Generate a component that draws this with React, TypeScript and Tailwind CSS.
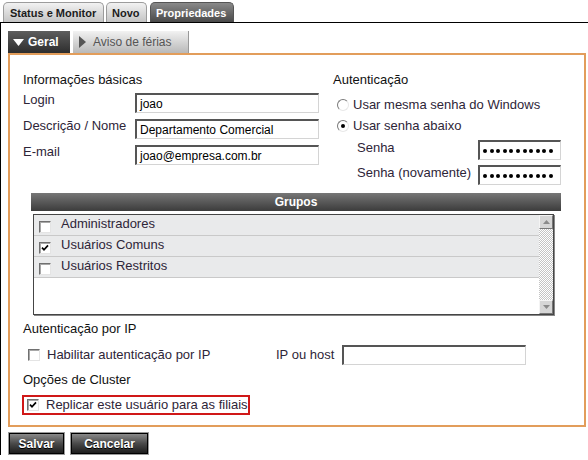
import React from "react";

// Old-school admin form: top tabs, sub tabs, orange fieldset and two glossy buttons.

function Box({ checked = false }: { checked?: boolean }) {
  return (
    <span className="flex h-[12px] w-[12px] shrink-0 items-center justify-center border-t border-l border-t-[#707070] border-l-[#707070] border-r border-b border-r-[#e4e4e4] border-b-[#e4e4e4] bg-white shadow-[inset_1px_1px_0_#a8a8a8]">
      {checked && (
        <svg viewBox="0 0 8 8" className="h-[8px] w-[8px]" aria-hidden="true">
          <path d="M1 3.6 L3 5.8 L7 1.4" stroke="#000" strokeWidth="1.7" fill="none" />
        </svg>
      )}
    </span>
  );
}

function Radio({ on = false }: { on?: boolean }) {
  return (
    <span className="flex h-[12px] w-[12px] shrink-0 items-center justify-center rounded-full border border-t-[#7a7a7a] border-l-[#7a7a7a] border-r-[#e8e8e8] border-b-[#e8e8e8] bg-white">
      {on && <span className="h-[4px] w-[4px] rounded-full bg-black" />}
    </span>
  );
}

function Field({ value = "", className = "" }: { value?: string; className?: string }) {
  return (
    <div
      className={`flex h-[20px] items-center border-t-2 border-l-2 border-t-[#555] border-l-[#555] border-r border-b border-r-[#d4d4d4] border-b-[#d4d4d4] bg-white pl-[3px] text-[12px] text-black ${className}`}
    >
      {value}
    </div>
  );
}

function Dots() {
  return (
    <div className="flex h-[20px] w-[83px] items-center gap-[2.6px] border-t-2 border-l-2 border-t-[#555] border-l-[#555] border-r border-b border-r-[#d4d4d4] border-b-[#d4d4d4] bg-white pl-[3px]">
      {Array.from({ length: 11 }).map((_, i) => (
        <span key={i} className="h-[4px] w-[4px] rounded-full bg-black" />
      ))}
    </div>
  );
}

function Arrow({ up }: { up?: boolean }) {
  return (
    <div className="flex h-[14px] w-[14px] items-center justify-center border border-t-[#f4f4f4] border-l-[#f4f4f4] border-r-[#777] border-b-[#777] bg-[#d6d6d6]">
      <svg viewBox="0 0 7 4" className="h-[4px] w-[7px]" aria-hidden="true">
        <path d={up ? "M0 4 L3.5 0 L7 4 Z" : "M0 0 L3.5 4 L7 0 Z"} fill="#8a8a8a" />
      </svg>
    </div>
  );
}

function Btn({ label, w }: { label: string; w: string }) {
  return (
    <div className={`flex h-[23px] ${w} items-center justify-center border border-[#9a9a9a] bg-black p-px`}>
      <div className="flex h-full w-full items-center justify-center bg-linear-to-b from-[#8a8a8a] via-[#4a4a4a] to-[#1e1e1e] text-[12px] font-bold text-white [text-shadow:0_1px_0_#000]">
        {label}
      </div>
    </div>
  );
}

const groups = [
  { name: "Administradores", on: false },
  { name: "Usuários Comuns", on: true },
  { name: "Usuários Restritos", on: false },
];

export default function App() {
  return (
    <div className="h-[460px] w-[588px] overflow-hidden bg-white font-['Liberation_Sans',Arial,sans-serif] text-[13px] leading-[16px] text-[#2e2538]">
      {/* top tabs */}
      <div className="flex h-[22px] items-end pl-[3px]">
        <div className="flex h-[20px] w-[101px] items-center rounded-t-[5px] border border-b-0 border-[#9c9c9c] bg-linear-to-b from-[#f2f2f2] to-[#c4c4c4] pl-[6px] text-[11px] font-bold text-[#1c1c1c]">
          Status e Monitor
        </div>
        <div className="ml-[2px] flex h-[20px] w-[41px] items-center rounded-t-[5px] border border-b-0 border-[#9c9c9c] bg-linear-to-b from-[#f2f2f2] to-[#c4c4c4] pl-[5px] text-[11px] font-bold text-[#1c1c1c]">
          Novo
        </div>
        <div className="ml-[3px] flex h-[20px] w-[84px] items-center rounded-t-[5px] border border-b-0 border-[#555] bg-linear-to-b from-[#8a8a8a] to-[#4a4a4a] pl-[5px] text-[11px] font-bold text-white">
          Propriedades
        </div>
      </div>

      <div className="border-t border-l border-black pl-[7px] pt-[8px]">
        {/* sub tabs */}
        <div className="flex h-[22px] gap-[3px]">
          <div className="flex h-[22px] w-[62px] items-center gap-[4px] bg-linear-to-b from-[#5e5e5e] to-[#2e2e2e] pl-[5px] text-[12px] font-bold text-white">
            <svg viewBox="0 0 11 7" className="h-[7px] w-[11px]" aria-hidden="true">
              <path d="M0 0 L11 0 L5.5 7 Z" fill="#fff" />
            </svg>
            Geral
          </div>
          <div className="flex h-[22px] w-[116px] items-center gap-[7px] border-r border-[#999] bg-linear-to-b from-[#f2f2f2] to-[#b9b9b9] pl-[6px] text-[12px] text-[#555]">
            <svg viewBox="0 0 7 12" className="h-[12px] w-[7px]" aria-hidden="true">
              <path d="M0 0 L7 6 L0 12 Z" fill="#555" />
            </svg>
            Aviso de férias
          </div>
        </div>

        {/* orange panel */}
        <div className="w-[578px] border-2 border-[#e29d5b] pb-[10px] pt-[17px]">
          <div className="flex">
            <div className="w-[323px] pl-[13px]">
              <div className="text-[#111]">Informações básicas</div>
              <div className="mt-[4px] flex flex-col gap-[5px]">
                {[
                  ["Login", "joao"],
                  ["Descrição / Nome", "Departamento Comercial"],
                  ["E-mail", "joao@empresa.com.br"],
                ].map(([l, v]) => (
                  <div key={l} className="flex items-start">
                    <span className="w-[112px]">{l}</span>
                    <Field value={v} className="mt-[1px] w-[184px]" />
                  </div>
                ))}
              </div>
            </div>
            <div className="flex-1">
              <div className="text-[#111]">Autenticação</div>
              <div className="mt-[9px] flex items-center gap-[4px] pl-[4px]">
                <Radio />
                <span>Usar mesma senha do Windows</span>
              </div>
              <div className="mt-[5px] flex items-center gap-[4px] pl-[4px]">
                <Radio on />
                <span>Usar senha abaixo</span>
              </div>
              <div className="mt-[6px] flex flex-col gap-[5px] pl-[24px]">
                <div className="flex items-start">
                  <span className="w-[121px]">Senha</span>
                  <Dots />
                </div>
                <div className="flex items-start">
                  <span className="w-[121px]">Senha (novamente)</span>
                  <Dots />
                </div>
              </div>
            </div>
          </div>

          {/* grupos */}
          <div className="ml-[21px] mt-[8px] flex h-[18px] w-[530px] items-center justify-center bg-linear-to-b from-[#777] to-[#3c3c3c] text-[12px] font-bold text-white">
            Grupos
          </div>
          <div className="ml-[23px] mt-[3px] flex h-[101px] w-[521px] border border-[#454545] shadow-[1px_1px_0_#888]">
            <div className="flex-1 bg-white">
              {groups.map((g) => (
                <div key={g.name} className="flex h-[21px] border-b border-[#c9c9c9] bg-[#e9eaeb] pl-[5px]">
                  <span className="mt-[6px]">
                    <Box checked={g.on} />
                  </span>
                  <span className="ml-[10px] mt-[1px]">{g.name}</span>
                </div>
              ))}
            </div>
            <div className="flex w-[14px] flex-col justify-between bg-[repeating-conic-gradient(#c4c4c4_0_25%,#fff_0_50%)] bg-[length:2px_2px]">
              <Arrow up />
              <Arrow />
            </div>
          </div>

          <div className="mt-[6px] pl-[13px]">
            <div className="text-[#111]">Autenticação por IP</div>
            <div className="mt-[8px] flex h-[20px] items-center">
              <span className="ml-[5px]">
                <Box />
              </span>
              <span className="ml-[7px] w-[229px]">Habilitar autenticação por IP</span>
              <span className="w-[66px]">IP ou host</span>
              <Field className="w-[184px]" />
            </div>
            <div className="mt-[7px] text-[#111]">Opções de Cluster</div>
            <div className="-ml-px mt-[7px] flex h-[20px] w-[228px] items-center border-2 border-[#d01818] pl-[3px]">
              <Box checked />
              <span className="ml-[7px]">Replicar este usuário para as filiais</span>
            </div>
          </div>
        </div>

        {/* buttons */}
        <div className="mt-[5px] flex gap-[5px]">
          <Btn label="Salvar" w="w-[57px]" />
          <Btn label="Cancelar" w="w-[79px]" />
        </div>
      </div>
    </div>
  );
}
